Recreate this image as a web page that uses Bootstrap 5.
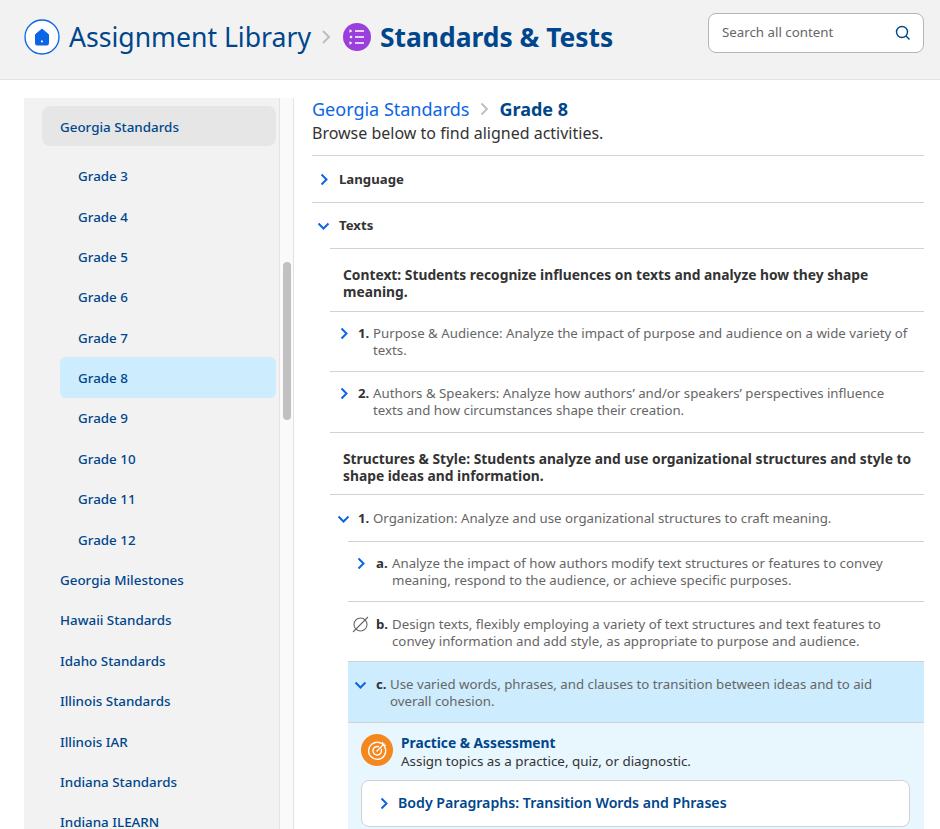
<!DOCTYPE html>
<html lang="en">
<head>
    <meta charset="UTF-8">
    <meta name="viewport" content="width=device-width, initial-scale=1.0">
    <title>Standards &amp; Tests</title>
    <link href="https://cdn.jsdelivr.net/npm/bootstrap@5.3.0/dist/css/bootstrap.min.css" rel="stylesheet">
    <style>
        html, body { height: 829px; overflow: hidden; }
        body { font-family: "Noto Sans", "Open Sans", sans-serif; color: #333; background: #fff; }
        .top-bar { height: 80px; background: #f2f2f2; border-bottom: 1px solid #e3e3e3; padding: 0 16px 0 24px; }
        .title-group { margin-bottom: 4px; }
        .crumb-light { font-size: 26.6px; color: #00468c; }
        .crumb-bold { font-size: 26.4px; font-weight: 700; color: #00468c; }
        .home-icon { margin-right: 9px; }
        .crumb-sep { margin: 0 12px 0 10px; }
        .list-icon { margin-right: 9px; }
        .search-box { width: 216px; height: 40px; margin-bottom: 14px; background: #fff; border: 1px solid #b5b5b5; border-radius: 8px; padding: 0 12px 0 13px; font-size: 13.3px; color: #666; }
        .page-body { height: 749px; padding: 18px 16px 0 24px; overflow: hidden; }
        .side-col { width: 256px; background: #f2f2f2; border-right: 1px solid #e3e3e3; padding: 8px 3px 0 18px; flex: none; }
        .side-link { display: flex; align-items: center; height: 40.4px; font-size: 13.4px; font-weight: 500; color: #00468c; padding: 1px 0 0 18px; text-decoration: none; }
        .side-link.sub { margin-left: 18px; }
        .side-link.open { height: 40px; background: #e6e6e6; border-radius: 8px; margin-bottom: 9.5px; padding-top: 3px; }
        .side-link.now { background: #cdecfd; border-radius: 6px; }
        .track { width: 14px; flex: none; background: #fafafa; border-right: 1px solid #e3e3e3; padding: 164px 2px 0 3px; margin-right: 18px; }
        .thumb { height: 158px; background: #c1c1c1; border-radius: 4px; }
        .main-col { flex: 1; min-width: 0; }
        .crumb-sm { font-size: 18px; color: #0b66e4; line-height: 22px; }
        .crumb-sm-b { font-size: 18px; font-weight: 700; color: #00468c; line-height: 22px; }
        .crumb-line { margin-bottom: 2px; }
        .crumb-line svg { margin: 0 10px 0 11px; }
        .intro { font-size: 16px; line-height: 22px; color: #333; margin-bottom: 11px; }
        .std-row { border-top: 1px solid #d2d2d2; display: flex; font-size: 13.25px; line-height: 17px; color: #666; }
        .row-top { align-items: center; padding-left: 2px; font-weight: 700; color: #333; font-size: 13.2px; }
        .row-top .tog { margin-right: 6px; }
        .top-a { height: 47px; }
        .top-b { height: 46px; }
        .row-head { margin-left: 18px; padding: 17px 8px 10px 13px; font-size: 13.8px; font-weight: 700; color: #333; display: block; }
        .row-item { margin-left: 18px; padding: 13px 8px 13px 4px; }
        .row-sub { margin-left: 36px; padding: 13px 8px 13px 3px; }
        .row-sub.picked { background: #cdecfd; }
        .pad-a { padding-bottom: 11px; }
        .pad-b { padding-bottom: 12px; }
        .pad-c { padding-top: 15px; padding-bottom: 14px; }
        .pad-d { padding-top: 14px; padding-bottom: 11px; }
        .pad-e { padding-top: 14px; padding-bottom: 12px; }
        .tog { width: 19px; height: 17px; flex: none; display: flex; justify-content: center; align-items: center; }
        .num { font-weight: 700; color: #333; flex: none; width: 15px; margin-left: 5px; }
        .num.letter { width: 16px; margin-left: 6px; }
        .num.short { width: 14px; }
        .assess { margin-left: 36px; background: #e8f6fe; border-top: 1px solid #d2d2d2; padding: 11px 14px 0 13px; height: 110px; }
        .assess-icon { width: 32px; height: 32px; flex: none; }
        .assess-title { font-size: 13.75px; font-weight: 700; color: #00468c; line-height: 18px; }
        .assess-sub { font-size: 13.4px; color: #333; line-height: 18px; }
        .topic-box { background: #fff; border: 1px solid #d2d2d2; border-radius: 8px; height: 47px; margin-top: 10px; padding: 0 0 2px 18px; font-size: 14.15px; font-weight: 600; color: #00468c; }
        .topic-box svg { margin: 2px 10px 0 0; }
    </style>
</head>
<body>
    <header class="top-bar d-flex align-items-center justify-content-between">
        <div class="title-group d-flex align-items-center">
            <svg class="home-icon" width="36" height="36" viewBox="0 0 36 36">
                <circle cx="18" cy="18" r="17" fill="#fff" stroke="#0b66e4" stroke-width="1.3"/>
                <path d="M18 10 L24.500 15.500 V24.500 Q24.500 26 23 26 H13 Q11.500 26 11.500 24.500 V15.500 Z" fill="#0b66e4" stroke="#0b66e4" stroke-linejoin="round"/>
                <rect x="17" y="21.500" width="1.800" height="1.800" fill="#fff"/>
            </svg>
            <span class="crumb-light">Assignment Library</span>
            <svg class="crumb-sep" width="10" height="16" viewBox="0 0 10 16"><path d="M2 2 L8 8 L2 14" fill="none" stroke="#bdbdbd" stroke-width="2"/></svg>
            <svg class="list-icon" width="28" height="28" viewBox="0 0 28 28">
                <circle cx="14" cy="14" r="14" fill="#9a3fdc"/>
                <path d="M12 8 H21 M12 14 H21 M12 20 H21" stroke="#fff" stroke-width="1.600"/>
                <path d="M6.500 6.300 L9.500 8 L6.500 9.700 Z M6.500 18.300 L9.500 20 L6.500 21.700 Z" fill="#fff"/>
                <circle cx="8" cy="14" r="1.300" fill="#fff"/>
            </svg>
            <span class="crumb-bold">Standards &amp; Tests</span>
        </div>
        <div class="search-box d-flex align-items-center justify-content-between">
            <span>Search all content</span>
            <svg width="16" height="16" viewBox="0 0 16 16"><circle cx="7" cy="7" r="5.500" fill="none" stroke="#00468c" stroke-width="1.400"/><path d="M11 11 L14.500 14.500" stroke="#00468c" stroke-width="1.400"/></svg>
        </div>
    </header>

    <div class="page-body d-flex">
        <nav class="side-col">
            <a class="side-link open">Georgia Standards</a>
            <a class="side-link sub">Grade 3</a>
            <a class="side-link sub">Grade 4</a>
            <a class="side-link sub">Grade 5</a>
            <a class="side-link sub">Grade 6</a>
            <a class="side-link sub">Grade 7</a>
            <a class="side-link sub now">Grade 8</a>
            <a class="side-link sub">Grade 9</a>
            <a class="side-link sub">Grade 10</a>
            <a class="side-link sub">Grade 11</a>
            <a class="side-link sub">Grade 12</a>
            <a class="side-link">Georgia Milestones</a>
            <a class="side-link">Hawaii Standards</a>
            <a class="side-link">Idaho Standards</a>
            <a class="side-link">Illinois Standards</a>
            <a class="side-link">Illinois IAR</a>
            <a class="side-link">Indiana Standards</a>
            <a class="side-link">Indiana ILEARN</a>
        </nav>
        <div class="track"><div class="thumb"></div></div>
        <main class="main-col">
            <div class="crumb-line d-flex align-items-center">
                <span class="crumb-sm">Georgia Standards</span>
                <svg width="9" height="14" viewBox="0 0 9 14"><path d="M1.500 1.500 L7 7 L1.500 12.500" fill="none" stroke="#bdbdbd" stroke-width="1.800"/></svg>
                <span class="crumb-sm-b">Grade 8</span>
            </div>
            <p class="intro">Browse below to find aligned activities.</p>

            <div class="std-row row-top top-a">
                <span class="tog"><svg width="8" height="13" viewBox="0 0 8 13"><path d="M1.500 1.500 L6.500 6.500 L1.500 11.500" fill="none" stroke="#0b66e4" stroke-width="2"/></svg></span>
                <span>Language</span>
            </div>
            <div class="std-row row-top top-b">
                <span class="tog"><svg width="13" height="8" viewBox="0 0 13 8"><path d="M1.500 1.500 L6.500 6.500 L11.500 1.500" fill="none" stroke="#0b66e4" stroke-width="2"/></svg></span>
                <span>Texts</span>
            </div>

            <div class="std-row row-head pad-a">Context: Students recognize influences on texts and analyze how they shape meaning.</div>
            <div class="std-row row-item pad-b">
                <span class="tog"><svg width="8" height="13" viewBox="0 0 8 13"><path d="M1.500 1.500 L6.500 6.500 L1.500 11.500" fill="none" stroke="#0b66e4" stroke-width="2"/></svg></span>
                <span class="num">1.</span><span>Purpose &amp; Audience: Analyze the impact of purpose and audience on a wide variety of texts.</span>
            </div>
            <div class="std-row row-item">
                <span class="tog"><svg width="8" height="13" viewBox="0 0 8 13"><path d="M1.500 1.500 L6.500 6.500 L1.500 11.500" fill="none" stroke="#0b66e4" stroke-width="2"/></svg></span>
                <span class="num">2.</span><span>Authors &amp; Speakers: Analyze how authors’ and/or speakers’ perspectives influence texts and how circumstances shape their creation.</span>
            </div>

            <div class="std-row row-head">Structures &amp; Style: Students analyze and use organizational structures and style to shape ideas and information.</div>
            <div class="std-row row-item pad-c">
                <span class="tog"><svg width="13" height="8" viewBox="0 0 13 8"><path d="M1.500 1.500 L6.500 6.500 L11.500 1.500" fill="none" stroke="#0b66e4" stroke-width="2"/></svg></span>
                <span class="num">1.</span><span>Organization: Analyze and use organizational structures to craft meaning.</span>
            </div>
            <div class="std-row row-sub pad-b">
                <span class="tog"><svg width="8" height="13" viewBox="0 0 8 13"><path d="M1.500 1.500 L6.500 6.500 L1.500 11.500" fill="none" stroke="#0b66e4" stroke-width="2"/></svg></span>
                <span class="num letter">a.</span><span>Analyze the impact of how authors modify text structures or features to convey meaning, respond to the audience, or achieve specific purposes.</span>
            </div>
            <div class="std-row row-sub pad-d">
                <span class="tog"><svg width="17" height="17" viewBox="0 0 17 17"><circle cx="8.500" cy="8.500" r="6.500" fill="none" stroke="#666" stroke-width="1.100"/><path d="M1 16 L16 1" stroke="#666" stroke-width="1.100"/></svg></span>
                <span class="num letter">b.</span><span>Design texts, flexibly employing a variety of text structures and text features to convey information and add style, as appropriate to purpose and audience.</span>
            </div>
            <div class="std-row row-sub picked pad-e">
                <span class="tog"><svg width="13" height="8" viewBox="0 0 13 8"><path d="M1.500 1.500 L6.500 6.500 L11.500 1.500" fill="none" stroke="#0b66e4" stroke-width="2"/></svg></span>
                <span class="num letter short">c.</span><span>Use varied words, phrases, and clauses to transition between ideas and to aid overall cohesion.</span>
            </div>
            <div class="assess">
                <div class="d-flex gap-2">
                    <svg class="assess-icon" viewBox="0 0 32 32">
                        <circle cx="16" cy="16" r="16" fill="#f5871f"/>
                        <path d="M20.500 9.500 A8.500 8.500 0 1 0 23.500 12.500" fill="none" stroke="#fff" stroke-width="1.400" stroke-linecap="round"/>
                        <path d="M17.500 12.700 A4.300 4.300 0 1 0 20.300 15.500" fill="none" stroke="#fff" stroke-width="1.400" stroke-linecap="round"/>
                        <path d="M16 17 L23 10 M21.500 8.500 L21.800 11.200 L24.500 11.500" fill="none" stroke="#fff" stroke-width="1.400" stroke-linecap="round"/>
                    </svg>
                    <div>
                        <div class="assess-title">Practice &amp; Assessment</div>
                        <div class="assess-sub">Assign topics as a practice, quiz, or diagnostic.</div>
                    </div>
                </div>
                <div class="topic-box d-flex align-items-center">
                    <svg width="8" height="13" viewBox="0 0 8 13"><path d="M1.500 1.500 L6.500 6.500 L1.500 11.500" fill="none" stroke="#0b66e4" stroke-width="2"/></svg>
                    <span>Body Paragraphs: Transition Words and Phrases</span>
                </div>
            </div>
        </main>
    </div>
    <script src="https://cdn.jsdelivr.net/npm/bootstrap@5.3.0/dist/js/bootstrap.bundle.min.js"></script>
</body>
</html>
